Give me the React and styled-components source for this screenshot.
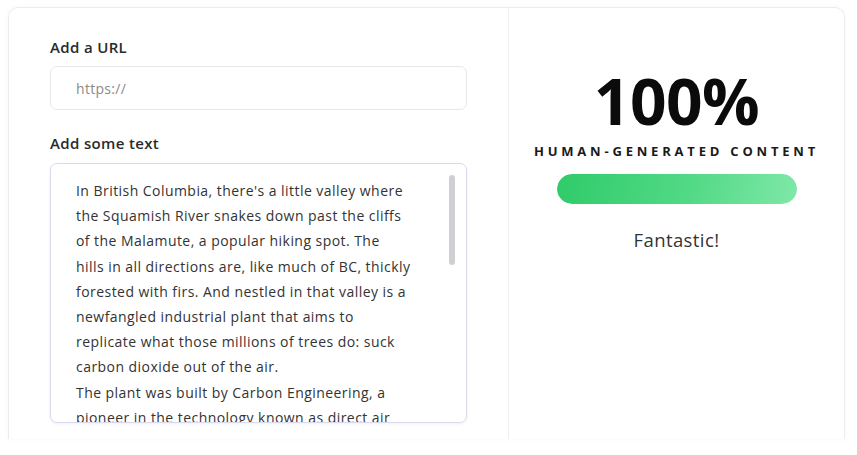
import React from 'react';
import styled, { createGlobalStyle } from 'styled-components';

const articleText = [
  "In British Columbia, there's a little valley where",
  'the Squamish River snakes down past the cliffs',
  'of the Malamute, a popular hiking spot. The',
  'hills in all directions are, like much of BC, thickly',
  'forested with firs. And nestled in that valley is a',
  'newfangled industrial plant that aims to',
  'replicate what those millions of trees do: suck',
  'carbon dioxide out of the air.',
  'The plant was built by Carbon Engineering, a',
  'pioneer in the technology known as direct air',
  'capture. It pulls in air with giant fans, runs it',
  'through a liquid that grabs the carbon dioxide,',
  'and turns the gas into tiny pellets that can be',
  'stored underground or made into fuel.',
].join('\n');

export default function App() {
  return (
    <>
      <GlobalStyle />
      <Page>
        <Card>
          <FormPanel>
            <Field>
              <Label htmlFor="url">Add a URL</Label>
              <UrlInput id="url" placeholder="https://" />
            </Field>
            <Field>
              <Label htmlFor="text">Add some text</Label>
              <TextFrame>
                <TextBox id="text" defaultValue={articleText} spellCheck={false} />
                <ScrollThumb />
              </TextFrame>
            </Field>
          </FormPanel>
          <ResultPanel>
            <Score>100%</Score>
            <ScoreLabel>Human-generated content</ScoreLabel>
            <Bar>
              <BarFill style={{ width: '100%' }} />
            </Bar>
            <Verdict>Fantastic!</Verdict>
          </ResultPanel>
        </Card>
      </Page>
    </>
  );
}

// Styles
const GlobalStyle = createGlobalStyle`
  body {
    margin: 0;
    background: #fff;
    font-family: "Open Sans", "Noto Sans", sans-serif;
    color: #1f1f1f;
  }
`;

const Page = styled.div`
  height: 455px;
  padding: 7px 12px 0 8px;
  box-sizing: border-box;
  overflow: hidden;
`;

const Card = styled.div`
  display: grid;
  grid-template-columns: 500px 1fr;
  height: 432px;
  border: 1px solid #ececf0;
  border-bottom: none;
  border-radius: 10px 10px 0 0;
  box-shadow: 0 0 6px rgba(0, 0, 0, 0.03);
  box-sizing: border-box;
  overflow: hidden;
`;

const FormPanel = styled.div`
  display: flex;
  flex-direction: column;
  gap: 22px;
  padding: 28px 41px 0 41px;
  border-right: 1px solid #efeff2;
`;

const Field = styled.div`
  display: flex;
  flex-direction: column;
  gap: 8px;
`;

const Label = styled.label`
  font-size: 15px;
  font-weight: 600;
  letter-spacing: 0.35px;
  color: #2a2a2a;
  line-height: 22px;
`;

const UrlInput = styled.input`
  height: 44px;
  box-sizing: border-box;
  border: 1px solid #e7e7ea;
  border-radius: 7px;
  padding: 0 25px;
  font-family: inherit;
  font-size: 14px;
  letter-spacing: 0.3px;
  color: #333;
  outline: none;

  &::placeholder {
    color: #8a8a8a;
  }
`;

const TextFrame = styled.div`
  position: relative;
  height: 260px;
  margin-top: 1px;
  border: 1px solid #d9d9ee;
  border-radius: 7px;
  box-sizing: border-box;
  box-shadow: 0 1px 3px rgba(120, 120, 180, 0.12);
  overflow: hidden;
`;

const TextBox = styled.textarea`
  display: block;
  width: 100%;
  height: 100%;
  box-sizing: border-box;
  border: none;
  padding: 14px 0 0 25px;
  font-family: inherit;
  font-size: 14px;
  letter-spacing: 0.45px;
  line-height: 25.2px;
  color: #333;
  white-space: pre;
  overflow: hidden;
  resize: none;
  outline: none;
  background: transparent;
`;

// sits over the text, in place of the styled scrollbar
const ScrollThumb = styled.div`
  position: absolute;
  top: 11px;
  right: 11px;
  width: 6px;
  height: 90px;
  border-radius: 4px;
  background: #cfcfd4;
`;

const ResultPanel = styled.div`
  display: flex;
  flex-direction: column;
  align-items: center;
  padding-top: 62px;
`;

const Score = styled.div`
  font-size: 64px;
  font-weight: 700;
  line-height: 62px;
  color: #0b0b0b;
  letter-spacing: -0.5px;
`;

const ScoreLabel = styled.div`
  margin-top: 10px;
  font-size: 13px;
  font-weight: 700;
  letter-spacing: 3.8px;
  text-transform: uppercase;
  color: #1a1a1a;
  line-height: 18px;
`;

const Bar = styled.div`
  width: 240px;
  height: 30px;
  margin-top: 14px;
  border-radius: 15px;
  background: #eef3ef;
  overflow: hidden;
`;

const BarFill = styled.div`
  height: 100%;
  border-radius: 15px;
  background: linear-gradient(100deg, #2fcb6a 0%, #52d985 55%, #7fe8a8 100%);
`;

const Verdict = styled.div`
  margin-top: 24px;
  font-size: 18.5px;
  letter-spacing: 0.4px;
  color: #333;
  line-height: 24px;
`;
